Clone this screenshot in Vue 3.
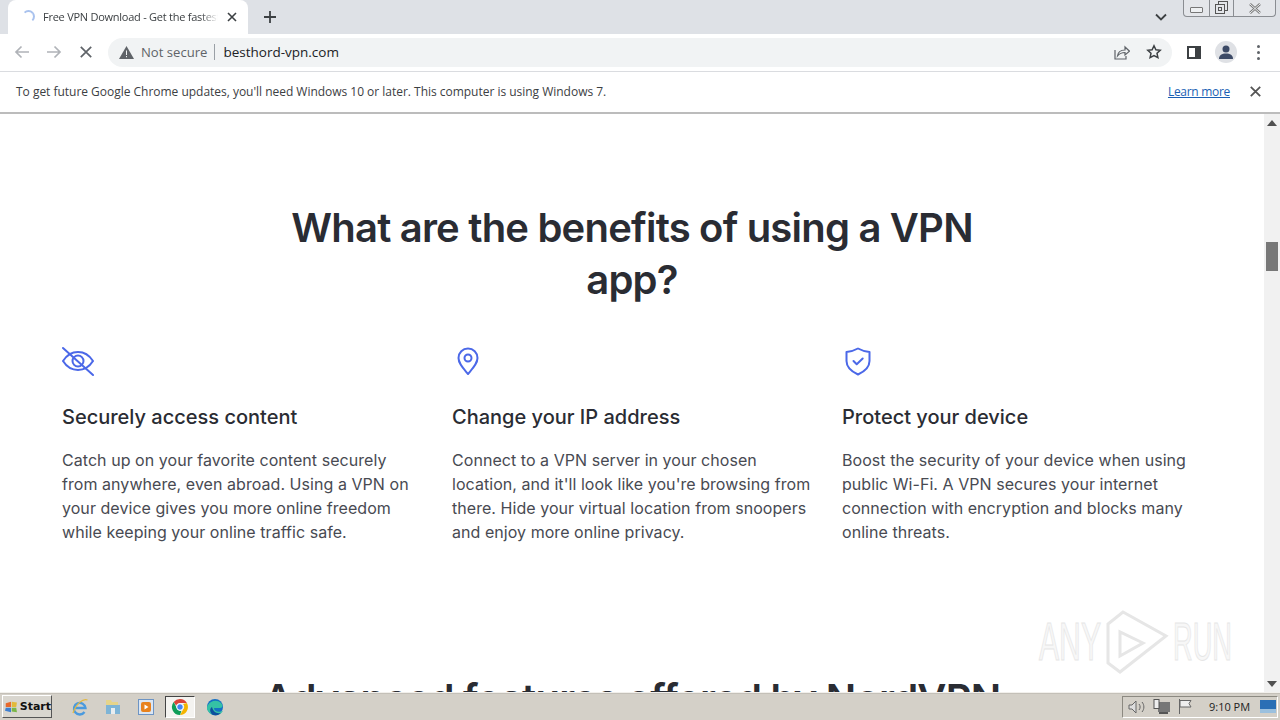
<template>
  <div class="screen">
    <div class="tabstrip">
      <div class="tab">
        <span class="spinner" />
        <span class="tab-title">Free VPN Download - Get the fastest VPN</span>
        <svg class="tab-close" width="10" height="10" viewBox="0 0 10 10"><path d="M1 1l8 8M9 1l-8 8" stroke="#3c4043" stroke-width="1.6" /></svg>
      </div>
      <svg class="new-tab" width="14" height="14" viewBox="0 0 14 14"><path d="M7 1v12M1 7h12" stroke="#3c4043" stroke-width="1.8" /></svg>
      <div class="strip-right">
        <svg class="chevron" width="12" height="8" viewBox="0 0 12 8"><path d="M1 1.5l5 5 5-5" fill="none" stroke="#3c4043" stroke-width="1.8" /></svg>
        <div class="winbtns">
          <div class="winbtn min"><span class="min-glyph" /></div>
          <div class="winbtn restore">
            <svg width="14" height="14" viewBox="0 0 14 14" fill="none" stroke="#555"><rect x="3.5" y="0.5" width="9" height="9" fill="#e4e6ea" /><rect x="0.5" y="3.5" width="9" height="9" fill="#e4e6ea" /><rect x="3.5" y="6.5" width="3" height="3" /></svg>
          </div>
          <div class="winbtn close">
            <svg width="14" height="11" viewBox="0 0 14 11"><path d="M2 1l10 9M12 1L2 10" stroke="#777" stroke-width="2.4" /><path d="M2 1l10 9M12 1L2 10" stroke="#eef0f2" stroke-width="1" /></svg>
          </div>
        </div>
      </div>
    </div>

    <div class="toolbar">
      <svg class="nav" width="16" height="14" viewBox="0 0 16 14"><path d="M15 7H2M7.5 1.5L2 7l5.5 5.5" fill="none" stroke="#b0b3b8" stroke-width="1.7" /></svg>
      <svg class="nav" width="16" height="14" viewBox="0 0 16 14"><path d="M1 7h13M8.500 1.500L14 7l-5.500 5.500" fill="none" stroke="#b0b3b8" stroke-width="1.7" /></svg>
      <svg class="nav stop" width="12" height="12" viewBox="0 0 12 12"><path d="M0.800 0.800l10.400 10.400M11.200 0.800L0.800 11.200" stroke="#5f6368" stroke-width="1.700" /></svg>
      <div class="omnibox">
        <svg width="15" height="13" viewBox="0 0 15 13"><path d="M7.500 0L15 13H0z" fill="#5f6368" /><path d="M7 4.500h1V9H7zM7 10h1v1.200H7z" fill="#f1f3f4" /></svg>
        <span class="not-secure">Not secure</span>
        <span class="sep" />
        <span class="url">besthord-vpn.com</span>
        <div class="omni-right">
          <svg width="16" height="16" viewBox="0 0 16 16" fill="none" stroke="#5f6368" stroke-width="1.200"><path d="M1 6v9h11v-3" /><path d="M3.500 12c.5-4 3.500-6 7.500-6V3l4.500 4.200L11 11V8.500c-3 0-5.500 1-7.500 3.500z" /></svg>
          <svg width="16" height="16" viewBox="0 0 16 16" fill="none" stroke="#3c4043" stroke-width="1.500"><path d="M8 1.800l1.900 4 4.300.5-3.200 3 .9 4.300L8 11.500l-3.900 2.100.9-4.300-3.200-3 4.300-.5z" /></svg>
        </div>
      </div>
      <div class="panel-icon" />
      <div class="avatar">
        <svg width="16" height="16" viewBox="0 0 16 16" fill="#3c4a66"><circle cx="8" cy="5" r="3.500" /><path d="M1 15c0-4 3-5.500 7-5.500s7 1.500 7 5.500z" /></svg>
      </div>
      <div class="dots"><i /><i /><i /></div>
    </div>

    <div class="infobar">
      <span class="info-text">To get future Google Chrome updates, you'll need Windows 10 or later. This computer is using Windows 7.</span>
      <a class="learn">Learn more</a>
      <svg width="11" height="11" viewBox="0 0 11 11"><path d="M0.800 0.800l9.400 9.400M10.200 0.800L0.800 10.200" stroke="#555" stroke-width="1.800" /></svg>
    </div>

    <div class="viewport">
      <div class="page">
        <h1 class="heading">What are the benefits of using a VPN<br />app?</h1>
        <div class="cols">
          <div class="col" v-for="b in benefits" :key="b.title">
            <svg class="benefit-icon" width="32" height="32" viewBox="0 0 32 32" fill="none" stroke="#4b68e8" stroke-width="2" stroke-linecap="round" stroke-linejoin="round">
              <template v-if="b.icon === 'eye'">
                <path d="M1 16c3.500-5.500 8.500-9 15-9s11.500 3.500 15 9c-3.500 5.500-8.500 9-15 9S4.500 21.500 1 16z" />
                <circle cx="16" cy="16" r="5.500" />
                <path d="M1 3l30 27" />
              </template>
              <template v-else-if="b.icon === 'pin'">
                <path d="M16 29c-5-6-9.500-10.500-9.500-16a9.500 9.500 0 0 1 19 0c0 5.500-4.500 10-9.500 16z" />
                <circle cx="16" cy="13" r="3.500" />
              </template>
              <template v-else>
                <path d="M16 3.500c3.500 2 7.500 3 11.500 3.500v9c0 6.500-5 10.500-11.500 13.500C9.500 26.500 4.500 22.500 4.500 16V7c4-.5 8-1.500 11.500-3.500z" />
                <path d="M11.500 16l3.200 3.200 6-5.700" />
              </template>
            </svg>
            <h2 class="benefit-title">{{ b.title }}</h2>
            <p class="benefit-text"><span v-for="l in b.lines" :key="l">{{ l }}<br /></span></p>
          </div>
        </div>
        <h1 class="heading next">Advanced features offered by NordVPN</h1>
      </div>
      <div class="scrollbar">
        <svg width="10" height="6" viewBox="0 0 10 6"><path d="M5 0l5 6H0z" fill="#505050" /></svg>
        <div class="thumb" />
        <svg class="down" width="10" height="6" viewBox="0 0 10 6"><path d="M5 6L0 0h10z" fill="#505050" /></svg>
      </div>
      <svg class="watermark" width="196" height="64" viewBox="0 0 196 64">
        <g fill="#f7f7f7" stroke="#e6e6e6" font-family="Liberation Sans, sans-serif" font-size="53">
          <text x="1" y="50" textLength="62" lengthAdjust="spacingAndGlyphs">ANY</text>
          <text x="135" y="50" textLength="59" lengthAdjust="spacingAndGlyphs">RUN</text>
        </g>
        <g fill="none" stroke="#e6e6e6" stroke-width="3">
          <path d="M85 2L128 26 82 62 70 53V14z" />
          <path d="M82 22v24l23-13z" />
        </g>
      </svg>
    </div>

    <div class="taskbar">
      <div class="start">
        <svg width="17" height="16" viewBox="0 0 17 16"><path d="M1 3l7-2v7H1z" fill="#e8692c" /><path d="M9 1l7 1-1 6H9z" fill="#e2b93a" /><path d="M1 9h7v6l-8-2z" fill="#3f7fd0" /><path d="M9 9h6l1 6-7-1z" fill="#7ab648" /></svg>
        <span>Start</span>
      </div>
      <div class="quick">
        <svg width="18" height="18" viewBox="0 0 18 18" fill="none"><path d="M3.500 10h11A5.800 5.800 0 1 0 13.500 14" stroke="#4a9ade" stroke-width="2.300" /><path d="M2 15C5 6 12 0 16.500 2" stroke="#e3b840" stroke-width="1.300" /></svg>
        <svg width="18" height="18" viewBox="0 0 18 18"><path d="M2 2h5l1 2h6v4H2z" fill="#e6d48a" /><rect x="2" y="7" width="14" height="9" fill="#7eb4d6" /><rect x="7" y="10" width="4" height="6" fill="#e8edf0" /></svg>
        <svg width="18" height="18" viewBox="0 0 18 18"><rect x="1.500" y="1.500" width="15" height="15" fill="#dbe6f3" stroke="#6d94c4" /><rect x="4" y="4" width="10" height="10" rx="2" fill="#e8821e" /><path d="M7.500 6.500l4 2.500-4 2.500z" fill="#fff" /></svg>
        <div class="task-active">
          <svg width="18" height="18" viewBox="0 0 18 18"><path d="M9 1a8 8 0 0 1 6.900 4H9a4 4 0 0 0-3.800 2.800L2.700 4A8 8 0 0 1 9 1z" fill="#db4437" /><path d="M15.900 5A8 8 0 0 1 9 17l3.400-6A4 4 0 0 0 12 6z" fill="#f4b400" /><path d="M2.700 4L6 10.500A4 4 0 0 0 10.500 12.800L9 17A8 8 0 0 1 2.700 4z" fill="#0f9d58" /><circle cx="9" cy="9" r="3.300" fill="#4285f4" stroke="#fff" /></svg>
        </div>
        <svg width="18" height="18" viewBox="0 0 18 18"><circle cx="9" cy="9" r="8" fill="#1470c4" /><path d="M2 7c2-4 9-6 13-2 2 2 2 5-1 5H8c0 3 4 5 9 3-2 3-5 4-8 4-4 0-7-3-8-6 0-2 0-3 1-4z" fill="#35c1a5" /><path d="M7 17C4 15 3 11 6 9c1 4 4 7 9 6-2 2-5 3-8 2z" fill="#0c4f9e" /></svg>
      </div>
      <div class="tray">
        <svg width="18" height="14" viewBox="0 0 18 14" fill="none" stroke="#666"><path d="M1 5h3l4-4v12l-4-4H1z" fill="#ddd" /><path d="M11 4c1.500 2 1.500 4 0 6M14 2c2.500 3 2.500 7 0 10" /></svg>
        <svg width="17" height="15" viewBox="0 0 17 15"><rect x="5" y="3" width="12" height="10" fill="#777" /><rect x="1" y="0.500" width="5" height="9" fill="#eee" stroke="#555" /><rect x="6" y="13" width="9" height="2" fill="#555" /></svg>
        <svg width="16" height="15" viewBox="0 0 16 15" fill="none" stroke="#666"><path d="M2.500 0v15" /><path d="M3 1.500h11l-2 3 2 3.500H3z" fill="#eee" /></svg>
        <span class="clock">9:10 PM</span>
        <svg class="show-desktop" width="16" height="13" viewBox="0 0 16 13"><rect width="16" height="13" fill="#2a6fb5" /><rect y="9" width="16" height="4" fill="#9bc0de" /></svg>
      </div>
    </div>
  </div>
</template>

<script setup>
const benefits = [
  {
    icon: 'eye',
    title: 'Securely access content',
    lines: [
      'Catch up on your favorite content securely',
      'from anywhere, even abroad. Using a VPN on',
      'your device gives you more online freedom',
      'while keeping your online traffic safe.',
    ],
  },
  {
    icon: 'pin',
    title: 'Change your IP address',
    lines: [
      'Connect to a VPN server in your chosen',
      "location, and it'll look like you're browsing from",
      'there. Hide your virtual location from snoopers',
      'and enjoy more online privacy.',
    ],
  },
  {
    icon: 'shield',
    title: 'Protect your device',
    lines: [
      'Boost the security of your device when using',
      'public Wi-Fi. A VPN secures your internet',
      'connection with encryption and blocks many',
      'online threats.',
    ],
  },
]
</script>

<style>
html, body {
  margin: 0;
  overflow: hidden;
  background: #fff;
}
</style>

<style scoped>
.screen {
  width: 1280px;
  height: 720px;
  display: flex;
  flex-direction: column;
  overflow: hidden;
  font-family: "Liberation Sans", sans-serif;
}

/* browser chrome */
.tabstrip {
  height: 34px;
  flex-shrink: 0;
  background: #dee1e6;
  display: flex;
  align-items: flex-start;
  padding-left: 8px;
}

.tab {
  width: 240px;
  height: 34px;
  box-sizing: border-box;
  background: #fff;
  border-radius: 8px 8px 0 0;
  display: flex;
  align-items: center;
  padding: 0 12px 1px 14px;
  font-family: "Open Sans", sans-serif;
  font-size: 11px;
  letter-spacing: -0.25px;
  color: #3c4043;
}

.spinner {
  width: 13px;
  height: 13px;
  box-sizing: border-box;
  border-radius: 50%;
  border: 2px solid transparent;
  border-top-color: #a9c2ee;
  border-right-color: #a9c2ee;
  flex-shrink: 0;
  margin-right: 8px;
}

.tab-title {
  width: 175px;
  white-space: nowrap;
  overflow: hidden;
  flex-shrink: 0;
  -webkit-mask-image: linear-gradient(to right, #000 90%, transparent);
  mask-image: linear-gradient(to right, #000 90%, transparent);
}

.tab-close {
  margin-left: 9px;
  flex-shrink: 0;
}

.new-tab {
  margin: 10px 0 0 15px;
}

.strip-right {
  margin-left: auto;
  display: flex;
  align-items: flex-start;
}

.chevron {
  margin: 13px 16px 0 0;
}

.winbtns {
  display: flex;
  height: 16px;
  margin-right: 4px;
  border: 1px solid #8a8d92;
  border-top: none;
  border-radius: 0 0 4px 4px;
  background: #e4e6ea;
}

.winbtn {
  display: flex;
  align-items: center;
  justify-content: center;
  box-sizing: border-box;
}

.min {
  width: 25px;
}

.min-glyph {
  width: 11px;
  height: 4px;
  margin-top: 4px;
  border: 1px solid #777;
  border-radius: 1px;
  background: #eef0f2;
}

.restore {
  width: 25px;
  border-left: 1px solid #8a8d92;
  border-right: 1px solid #8a8d92;
}

.close {
  width: 41px;
}

.toolbar {
  height: 38px;
  flex-shrink: 0;
  box-sizing: border-box;
  background: #fff;
  border-bottom: 1px solid #dadce0;
  display: flex;
  align-items: center;
  padding: 0 14px 1px 14px;
}

.nav {
  flex-shrink: 0;
  margin-right: 16px;
}

.stop {
  margin: 0 18px 0 0;
  position: relative;
  left: 2px;
}

.omnibox {
  width: 1064px;
  height: 29px;
  flex-shrink: 0;
  box-sizing: border-box;
  padding: 0 10px 0 11px;
  border-radius: 15px;
  background: #f1f3f4;
  display: flex;
  align-items: center;
  font-family: "Open Sans", sans-serif;
  font-size: 13.500px;
}

.not-secure {
  margin-left: 7px;
  font-size: 13.100px;
  color: #5f6368;
}

.sep {
  width: 1px;
  height: 16px;
  background: #9aa0a6;
  margin: 0 8px 0 7px;
}

.url {
  color: #202124;
}

.omni-right {
  margin-left: auto;
  display: flex;
  gap: 16px;
  align-items: center;
}

.panel-icon {
  width: 14px;
  height: 13px;
  box-sizing: border-box;
  margin-left: 15px;
  border: 2px solid #3c4043;
  border-right-width: 6px;
  flex-shrink: 0;
}

.avatar {
  width: 22px;
  height: 22px;
  border-radius: 50%;
  background: #dfe1e5;
  margin-left: 14px;
  display: flex;
  align-items: center;
  justify-content: center;
  flex-shrink: 0;
}

.dots {
  margin-left: 20px;
  display: flex;
  flex-direction: column;
  gap: 3px;
}

.dots i {
  width: 3px;
  height: 3px;
  border-radius: 50%;
  background: #5f6368;
  display: block;
}

.infobar {
  height: 42px;
  flex-shrink: 0;
  box-sizing: border-box;
  background: #fff;
  border-bottom: 2px solid #bcbcbc;
  display: flex;
  align-items: center;
  padding: 0 19px 1px 16px;
  font-family: "Open Sans", sans-serif;
  font-size: 12px;
  letter-spacing: -0.02px;
  color: #3c4043;
}

.info-text {
  flex: 1;
}

.learn {
  color: #1a5fb4;
  text-decoration: underline;
  letter-spacing: -0.3px;
  margin-right: 20px;
}

/* page */
.viewport {
  flex: 1;
  min-height: 0;
  position: relative;
  display: flex;
  overflow: hidden;
  background: #fff;
}

.page {
  flex: 1;
  min-width: 0;
  padding-top: 88px;
  font-family: Inter, sans-serif;
  color: #2a2c33;
}

.heading {
  margin: 0 auto;
  text-align: center;
  font-size: 40px;
  line-height: 52px;
  font-weight: 600;
  letter-spacing: -0.8px;
}

.cols {
  display: grid;
  grid-template-columns: repeat(3, 390px);
  padding-left: 62px;
  margin-top: 39px;
}

.col {
  padding-right: 30px;
}

.benefit-icon {
  display: block;
}

.benefit-title {
  margin: 26px 0 0;
  font-size: 20px;
  line-height: 28px;
  font-weight: 500;
}

.benefit-text {
  margin: 17px 0 0;
  font-size: 16px;
  line-height: 24px;
  font-weight: 400;
  letter-spacing: 0.05px;
  color: #484a52;
  white-space: nowrap;
}

.next {
  margin-top: 129px;
}

.scrollbar {
  width: 16px;
  flex-shrink: 0;
  background: #f1f1f1;
  display: flex;
  flex-direction: column;
  align-items: center;
  padding: 6px 0 5px;
  box-sizing: border-box;
}

.thumb {
  width: 12px;
  height: 29px;
  margin-top: 116px;
  background: #787878;
}

.down {
  margin-top: auto;
}

.watermark {
  position: absolute;
  left: 1038px;
  top: 496px;
}

/* windows taskbar */
.taskbar {
  height: 28px;
  flex-shrink: 0;
  box-sizing: border-box;
  border-top: 1px solid #f2f0ec;
  background: #d4d0c8;
  display: flex;
  align-items: center;
  box-shadow: inset 0 1px 0 #c4c0b8;
}

.start {
  width: 50px;
  height: 23px;
  margin-left: 2px;
  box-sizing: border-box;
  display: flex;
  align-items: center;
  gap: 2px;
  padding-left: 2px;
  font-family: "DejaVu Sans", sans-serif;
  font-size: 11px;
  font-weight: 700;
  color: #111;
  background: #d9d6cf;
  border: 1px solid;
  border-color: #fff #555 #555 #fff;
}

.quick {
  display: flex;
  align-items: center;
  margin-left: 19px;
  gap: 15px;
}

.task-active {
  width: 30px;
  height: 22px;
  margin: 0 -4px 0 -5px;
  box-sizing: border-box;
  background: #f4f3f0;
  border: 1px solid;
  border-color: #444 #fff #fff #444;
  display: flex;
  align-items: center;
  justify-content: center;
}

.tray {
  margin-left: auto;
  margin-right: 2px;
  height: 22px;
  width: 156px;
  box-sizing: border-box;
  display: flex;
  align-items: center;
  gap: 7px;
  padding-left: 5px;
  border: 1px solid;
  border-color: #8c8981 #fff #fff #8c8981;
  font-family: "Open Sans", sans-serif;
  font-size: 11px;
  color: #222;
}

.clock {
  margin-left: 9px;
  white-space: nowrap;
}

.show-desktop {
  margin-left: auto;
  margin-right: 1px;
}
</style>
